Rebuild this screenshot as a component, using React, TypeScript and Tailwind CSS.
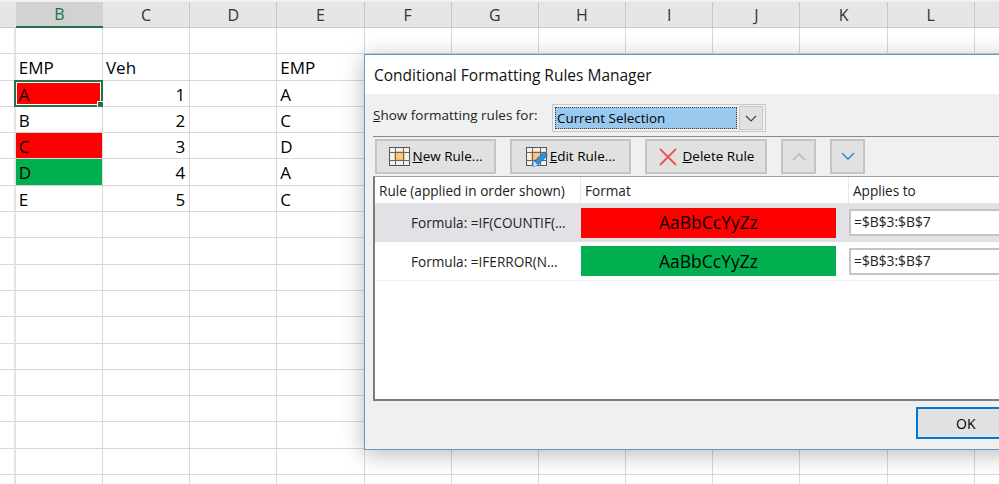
const COLS = ["B", "C", "D", "E", "F", "G", "H", "I", "J", "K", "L", ""];

type Row = { b?: string; c?: string; e?: string; fill?: "red" | "green"; sel?: boolean };

const DATA: Row[] = [
  {},
  { b: "EMP", c: "Veh", e: "EMP" },
  { b: "A", c: "1", e: "A", fill: "red", sel: true },
  { b: "B", c: "2", e: "C" },
  { b: "C", c: "3", e: "D", fill: "red" },
  { b: "D", c: "4", e: "A", fill: "green" },
  { b: "E", c: "5", e: "C" },
];
const ROWS: Row[] = [...DATA, ...Array.from({ length: 11 }, () => ({}))];

function GridIcon({ pencil }: { pencil?: boolean }) {
  return (
    <svg width="22" height="20" viewBox="0 0 22 20" className="shrink-0">
      <rect x="0.5" y="0.5" width="20" height="18" fill="#f4f0ea" stroke="#555" />
      <rect x="6" y="5" width="9" height="8" fill="#fcc679" stroke="#f6a33a" />
      <path d="M0 5.5H21M0 13.5H21M6.5 0V19M14.5 0V19" stroke="#666" strokeWidth="1" fill="none" />
      {pencil && (
        <g>
          <path d="M7 19.5l1.2-5L18 4.8l3.6 3.4-9.8 9.8z" fill="#2f8fd8" stroke="#1c6fb0" strokeWidth="0.8" />
          <path d="M7 19.5l1.2-5 3.6 3.5z" fill="#d8ecfa" />
        </g>
      )}
    </svg>
  );
}

function Sheet() {
  return (
    <div className="flex flex-col">
      <div className="flex h-[28px] bg-[#e6e6e6] border-t-2 border-t-[#f1f1f1] text-[#333] text-[16px]">
        <div className="w-[15.8px] shrink-0 border-b border-[#c8c8c8]" />
        {COLS.map((c, i) => (
          <div
            key={i}
            className={
              c === "B"
                ? "w-[87.2px] shrink-0 flex items-center justify-center bg-[#d2d2d2] border-b-2 border-[#217346] text-[#217346]"
                : "w-[87.2px] shrink-0 flex items-center justify-center border-r border-b border-[#c8c8c8]"
            }
          >
            {c}
          </div>
        ))}
      </div>
      {ROWS.map((r, i) => (
        <div key={i} className="flex h-[26.3px] text-[17px] text-black">
          <div className="w-[15.8px] shrink-0 border-b border-[#d8d8d8] border-r-2 border-r-[#e2e2e2]" />
          {COLS.map((c, j) => {
            if (c === "B") {
              const bg =
                r.fill === "red" ? "bg-[#ff0000]" : r.fill === "green" ? "bg-[#00b050]" : "";
              return (
                <div
                  key={j}
                  className={`relative w-[87.2px] shrink-0 flex items-center pt-[2px] pl-[3px] border-r border-b border-[#d8d8d8] ${bg}`}
                >
                  {r.sel && (
                    <>
                      <span className="absolute -left-[2px] -top-[1px] -right-[1px] -bottom-[1px] border-2 border-[#217346] outline outline-1 -outline-offset-3 outline-white" />
                      <span className="absolute -right-[2px] -bottom-[2px] w-[5px] h-[5px] bg-[#217346] border border-white box-content" />
                    </>
                  )}
                  <span className="relative">{r.b}</span>
                </div>
              );
            }
            if (c === "C") {
              return (
                <div
                  key={j}
                  className={`w-[87.2px] shrink-0 flex items-center pt-[2px] border-r border-b border-[#d8d8d8] ${
                    i === 1 ? "pl-[3px]" : "justify-end pr-[4px]"
                  }`}
                >
                  {r.c}
                </div>
              );
            }
            return (
              <div
                key={j}
                className="w-[87.2px] shrink-0 flex items-center pt-[2px] pl-[3px] border-r border-b border-[#d8d8d8]"
              >
                {c === "E" ? r.e : ""}
              </div>
            );
          })}
        </div>
      ))}
    </div>
  );
}

function ToolButton({ w, children }: { w: string; children: React.ReactNode }) {
  return (
    <div
      className={`${w} h-[35px] shrink-0 flex items-center justify-center gap-[2px] bg-[#e1e1e1] border-2 border-[#c4c4c4] text-[13.5px] text-black`}
    >
      {children}
    </div>
  );
}

function RuleRow({ sel, text, color }: { sel?: boolean; text: string; color: string }) {
  return (
    <div className={`flex h-[39px] items-center ${sel ? "bg-[#e1e1e6]" : "bg-white border-b border-[#f0f0f0]"}`}>
      <div className="w-[206px] shrink-0 pl-[36px] pt-[2px] text-[13.6px] text-[#222] whitespace-nowrap">{text}</div>
      <div
        className={`w-[255px] h-[30px] shrink-0 flex items-center justify-center text-[17.5px] text-black ${color}`}
      >
        AaBbCcYyZz
      </div>
      <div className="ml-[13px] w-[200px] h-[27px] shrink-0 flex items-center pl-[3px] bg-white border-2 border-[#c4c4c4] text-[13.8px] text-[#222]">
        =$B$3:$B$7
      </div>
    </div>
  );
}

function Dialog() {
  return (
    <div className="absolute left-[364px] top-[54px] w-[700px] h-[396px] flex flex-col bg-[#f0f0f0] border border-[#5a9bd5] shadow-[0_4px_22px_rgba(0,0,0,0.28)] font-['Open_Sans',sans-serif]">
      <div className="h-[39px] shrink-0 bg-white flex items-end pl-[9px] pb-[7px] text-[15.5px] text-[#111]">
        Conditional Formatting Rules Manager
      </div>
      <div className="flex items-center h-[42px] shrink-0 pl-[8px] text-[13.5px] text-[#222]">
        <span className="w-[179px] shrink-0">
          <span className="underline">S</span>how formatting rules for:
        </span>
        <div className="w-[214px] h-[28px] flex items-center gap-[2px] border border-[#c8c8c8] p-[2px] mt-[6px]">
          <div className="w-[184px] h-[22px] flex items-center pl-[1px] bg-[#99c9ef] border border-dotted border-[#444] text-[13.4px] text-black">
            Current Selection
          </div>
          <div className="w-[24px] h-[24px] flex items-center justify-center bg-[#e1e1e1] border border-[#c8c8c8]">
            <svg width="12" height="7" viewBox="0 0 12 7">
              <path d="M1 1l5 5 5-5" fill="none" stroke="#444" strokeWidth="1.2" />
            </svg>
          </div>
        </div>
      </div>
      <div className="ml-[8px] flex flex-col flex-1 mb-[6px]">
        <div className="h-[40px] shrink-0 border-t border-[#8a8a8a] flex items-center pl-[2px] gap-[14px]">
          <ToolButton w="w-[121px]">
            <GridIcon />
            <span>
              <span className="underline">N</span>ew Rule...
            </span>
          </ToolButton>
          <ToolButton w="w-[121px]">
            <GridIcon pencil />
            <span>
              <span className="underline">E</span>dit Rule...
            </span>
          </ToolButton>
          <ToolButton w="w-[122px]">
            <svg width="20" height="20" viewBox="0 0 20 20" className="shrink-0 mr-[3px]">
              <path d="M2 2l16 16M18 2L2 18" stroke="#e8574f" strokeWidth="1.8" fill="none" />
            </svg>
            <span>
              <span className="underline">D</span>elete Rule
            </span>
          </ToolButton>
          <ToolButton w="w-[35px]">
            <svg width="14" height="9" viewBox="0 0 14 9">
              <path d="M1 8l6-6 6 6" fill="none" stroke="#b8b8b8" strokeWidth="1.5" />
            </svg>
          </ToolButton>
          <ToolButton w="w-[35px]">
            <svg width="14" height="9" viewBox="0 0 14 9">
              <path d="M1 1l6 6 6-6" fill="none" stroke="#2f8fd8" strokeWidth="1.6" />
            </svg>
          </ToolButton>
        </div>
        <div className="h-[225px] shrink-0 bg-white border-t border-t-[#a0a0a0] border-l-2 border-l-[#7c7c7c] border-b-2 border-b-[#7c7c7c]">
          <div className="flex h-[26px] items-center text-[13.6px] text-[#222]">
            <div className="w-[206px] shrink-0 pl-[4px] pt-[2px] h-full flex items-center border-r border-[#e8e8e8] whitespace-nowrap">
              Rule (applied in order shown)
            </div>
            <div className="w-[268px] shrink-0 pl-[4px] pt-[2px] h-full flex items-center border-r border-[#e8e8e8]">
              Format
            </div>
            <div className="pl-[4px] pt-[2px]">Applies to</div>
          </div>
          <RuleRow sel text="Formula: =IF(COUNTIF(..." color="bg-[#ff0000]" />
          <RuleRow text="Formula: =IFERROR(N..." color="bg-[#00b050]" />
        </div>
        <div className="flex justify-start pl-[543px] pt-[6px]">
          <div className="w-[120px] h-[32px] shrink-0 flex items-center justify-start pl-[38px] bg-[#e1e1e1] border-2 border-[#0078d7] text-[14px] text-black">
            OK
          </div>
        </div>
      </div>
    </div>
  );
}

export default function App() {
  return (
    <div className="relative w-[999px] h-[484px] overflow-hidden bg-white font-['Open_Sans',sans-serif]">
      <Sheet />
      <Dialog />
    </div>
  );
}
